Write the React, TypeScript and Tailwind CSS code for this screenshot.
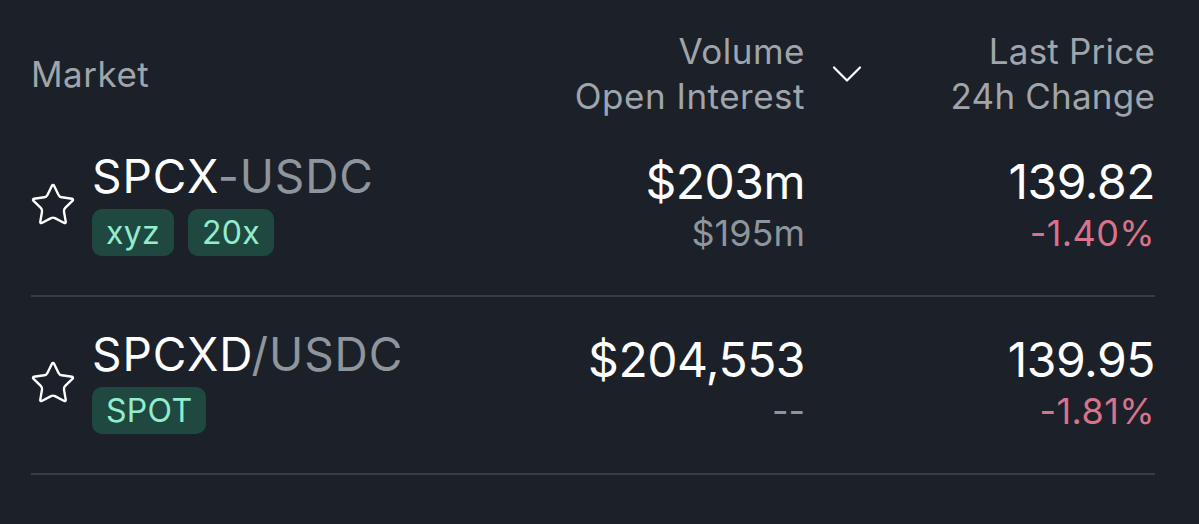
import { Star } from "lucide-react";

interface MarketRowProps {
	base: string;
	sep: string;
	quote: string;
	tags: string[];
	volume: string;
	openInterest: string;
	price: string;
	change: string;
}

const markets: MarketRowProps[] = [
	{
		base: "SPCX",
		sep: "-",
		quote: "USDC",
		tags: ["xyz", "20x"],
		volume: "$203m",
		openInterest: "$195m",
		price: "139.82",
		change: "-1.40%",
	},
	{
		base: "SPCXD",
		sep: "/",
		quote: "USDC",
		tags: ["SPOT"],
		volume: "$204,553",
		openInterest: "--",
		price: "139.95",
		change: "-1.81%",
	},
];

const MarketRow = ({
	base,
	sep,
	quote,
	tags,
	volume,
	openInterest,
	price,
	change,
}: MarketRowProps) => {
	return (
		<div className="flex items-start h-[178px] pt-[31px] border-b-2 border-[#383c44]">
			<div className="flex-1 flex items-center">
				<Star size={48} strokeWidth={1.2} className="text-white -ml-[2px] mt-[4px]" />
				<div className="ml-[15px]">
					<div className="text-[46px] leading-[52px] tracking-[0.9px]">
						<span className="text-white">{base}</span>
						<span className="text-[#8f959c]">
							{sep}
							{quote}
						</span>
					</div>
					<div className="mt-[7px] flex gap-x-[14px]">
						{tags.map((t) => (
							<span
								key={t}
								className="h-[47px] rounded-[10px] px-[14px] bg-[#1f4840] text-[#93ecce] text-[32px] leading-[47px] tracking-[0.3px]"
							>
								{t}
							</span>
						))}
					</div>
				</div>
			</div>
			<div className="pt-[6px] text-right">
				<div className="text-white text-[48px] leading-[52px] tracking-[-0.5px]">{volume}</div>
				<div className="mt-[3px] text-[#8f959c] text-[36px] leading-[45px]">{openInterest}</div>
			</div>
			<div className="w-[350px] pt-[6px] text-right">
				<div className="text-white text-[48px] leading-[52px] tracking-[-0.5px]">{price}</div>
				<div className="mt-[3px] text-[#d9738b] text-[36px] leading-[45px] tracking-[0.4px]">{change}</div>
			</div>
		</div>
	);
};

export default function App() {
	return (
		<div className="min-h-screen bg-[#1b2029] pl-[31px] pr-[44px] font-['Inter',sans-serif]">
			<div className="flex items-center pt-[29px] text-[#a0a5ab] text-[35px] leading-[45px] tracking-[0.5px]">
				<div className="flex-1">Market</div>
				<div className="text-right">
					<div>Volume</div>
					<div>Open Interest</div>
				</div>
				<div className="w-[350px] flex items-center">
					<svg width="30" height="18" viewBox="0 0 30 18" className="ml-[27px]" fill="none">
						<path d="M2 2.5 L15 15.5 L28 2.5" stroke="white" strokeWidth="2.2" strokeLinecap="round" strokeLinejoin="round" />
					</svg>
					<div className="flex-1 text-right tracking-[0.2px]">
						<div>Last Price</div>
						<div>24h Change</div>
					</div>
				</div>
			</div>
			{markets.map((m) => (
				<MarketRow key={m.base} {...m} />
			))}
		</div>
	);
}
